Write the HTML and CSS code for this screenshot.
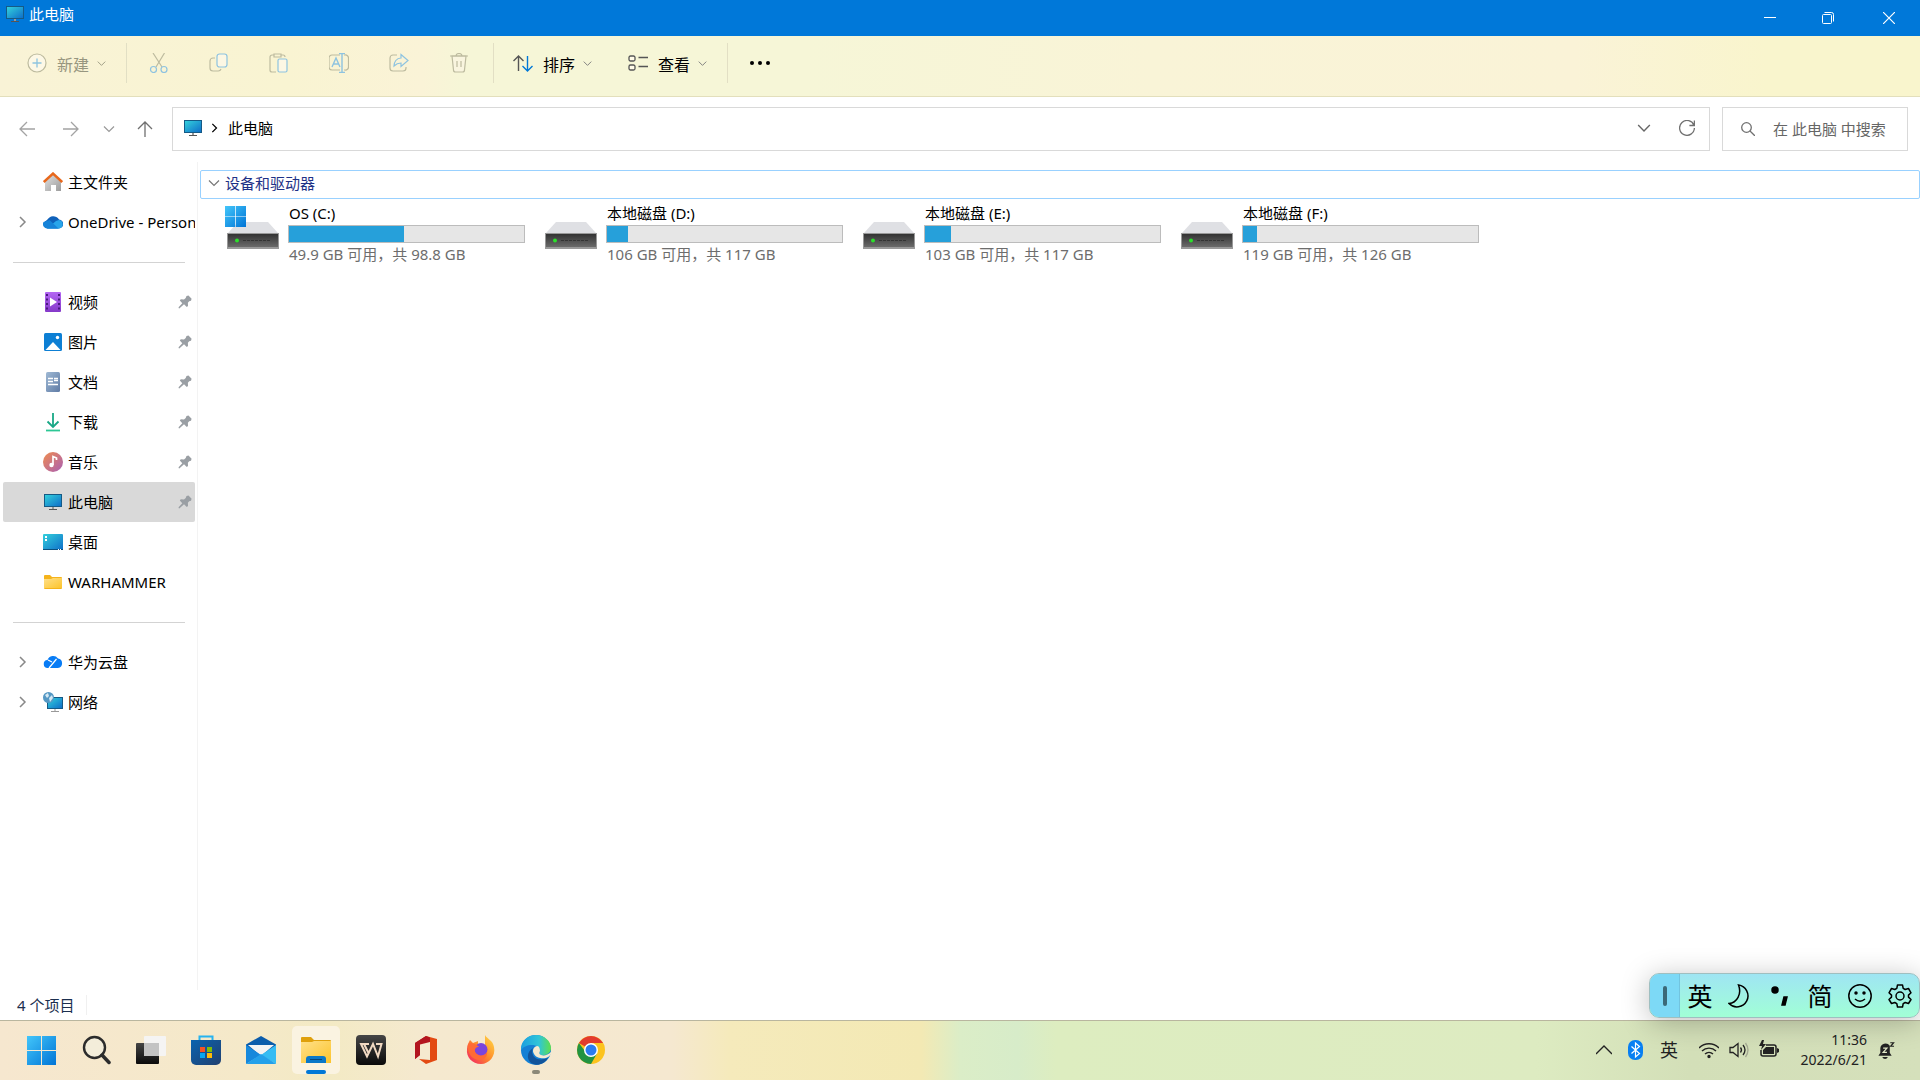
FILE: index.html
```html
<!DOCTYPE html>
<html lang="zh-CN">
<head>
<meta charset="utf-8">
<meta name="viewport" content="width=device-width, initial-scale=1">
<title>此电脑</title>
<link rel="stylesheet" href="styles.css">
</head>
<body>
<svg class="defs" aria-hidden="true">
  <defs>
    <linearGradient id="g-screen" x1="0" y1="0" x2="1" y2="1"><stop offset="0" stop-color="#33d0dc"/><stop offset="1" stop-color="#0f6fc9"/></linearGradient>
    <linearGradient id="g-win" x1="0" y1="0" x2="1" y2="1"><stop offset="0" stop-color="#43c6fa"/><stop offset="1" stop-color="#0074d6"/></linearGradient>
    <linearGradient id="g-drive" x1="0" y1="0" x2="0" y2="1"><stop offset="0" stop-color="#333"/><stop offset="1" stop-color="#6a6a6a"/></linearGradient>
    <linearGradient id="g-folder" x1="0" y1="0" x2="1" y2="1"><stop offset="0" stop-color="#ffe08a"/><stop offset="1" stop-color="#fcc42c"/></linearGradient>
    <linearGradient id="g-video" x1="0" y1="0" x2="0" y2="1"><stop offset="0" stop-color="#b467f3"/><stop offset="1" stop-color="#8539c9"/></linearGradient>
    <linearGradient id="g-music" x1="0" y1="0" x2="1" y2="1"><stop offset="0" stop-color="#f08c4e"/><stop offset="1" stop-color="#a95fb5"/></linearGradient>
    <linearGradient id="g-doc" x1="0" y1="0" x2="1" y2="1"><stop offset="0" stop-color="#9fb9d4"/><stop offset="1" stop-color="#5f7ba5"/></linearGradient>
    <linearGradient id="g-dark" x1="0" y1="0" x2="0" y2="1"><stop offset="0" stop-color="#454545"/><stop offset="1" stop-color="#0a0a0a"/></linearGradient>
    <linearGradient id="g-home" x1="0" y1="0" x2="1" y2="1"><stop offset="0" stop-color="#e2e2e2"/><stop offset="1" stop-color="#9c9c9c"/></linearGradient>
    <linearGradient id="g-store" x1="0" y1="0" x2="1" y2="1"><stop offset="0" stop-color="#0a64b0"/><stop offset="1" stop-color="#21406f"/></linearGradient>
    <linearGradient id="g-fox" x1="1" y1="0" x2="0" y2="1"><stop offset="0" stop-color="#ffe04a"/><stop offset=".5" stop-color="#ff8a2a"/><stop offset="1" stop-color="#f0186c"/></linearGradient>
    <linearGradient id="g-edge" x1="0" y1="0" x2="1" y2="0"><stop offset="0" stop-color="#1a9fe0"/><stop offset=".6" stop-color="#30c5d8"/><stop offset="1" stop-color="#5ee04a"/></linearGradient>
  </defs>
  <symbol id="pc" viewBox="0 0 18 17"><path d="M0 0h18v13H0z" fill="#155a86"/><path d="M1 1h16v11H1z" fill="url(#g-screen)"/><path d="M8 13h2v2H8z" fill="#999"/><path d="M5 15h8v1H5z" fill="#555"/></symbol>
  <symbol id="right" viewBox="0 0 12 12"><path d="M4 1l5 5-5 5" fill="none" stroke="currentColor" stroke-width="1.5"/></symbol>
  <symbol id="down" viewBox="0 0 12 12"><path d="M1 3.500l5 5 5-5" fill="none" stroke="currentColor" stroke-width="1.200"/></symbol>
  <symbol id="pin" viewBox="0 0 14 14"><path d="M8.500 1l2-.6L13.600 3.700l-.6 2-1.800.5-1.300 1.500.1 3.300-1.200 1-2.800-2.700L1.300 13.500.5 13l.3-.9L4.300 8.200 1.800 5.500l1-1.200 3.200.2L7.700 3z" fill="#9a9fa4"/></symbol>
  <symbol id="logo" viewBox="0 0 29 29"><path d="M0 0h14v14H0zM15 0h14v14H15zM0 15h14v14H0zM15 15h14v14H15z" fill="url(#g-win)"/></symbol>
  <symbol id="drive" viewBox="0 0 52 27"><path d="M11 0h30l10 11H1z" fill="#dfe0e4"/><path d="M0 11h52v16H0z" fill="#999"/><path d="M1 12h50v13H1z" fill="url(#g-drive)"/><path d="M16 18.500h28" stroke="#333" stroke-dasharray="3 1"/><circle cx="10" cy="18.500" r="2" fill="#2be02b"/></symbol>
</svg>

<header class="titlebar">
  <svg class="i18"><use href="#pc"/></svg>
  <h1>此电脑</h1>
  <div class="caption">
    <button aria-label="最小化"><svg viewBox="0 0 12 12"><path d="M0 5.500h12" stroke="#fff"/></svg></button>
    <button aria-label="还原"><svg viewBox="0 0 12 12" fill="none" stroke="#fff"><rect x=".5" y="2.500" width="9" height="9" rx="1"/><path d="M2.500 .5h7a2 2 0 0 1 2 2v7"/></svg></button>
    <button aria-label="关闭"><svg viewBox="0 0 12 12"><path d="M0 0l12 12M12 0L0 12" stroke="#fff" stroke-width="1.200"/></svg></button>
  </div>
</header>

<div class="toolbar" role="toolbar" aria-label="命令栏">
  <button class="cmd new" disabled><svg class="i20" viewBox="0 0 20 20" fill="none"><circle cx="10" cy="10" r="9" fill="#fdf8e6" stroke="#bdbb9f" stroke-width="1.200"/><path d="M10 5.500v9M5.500 10h9" stroke="#8ec3e0" stroke-width="1.300"/></svg><span>新建</span><svg class="chev"><use href="#down"/></svg></button>
  <i class="rule"></i>
  <div class="tools">
    <button disabled aria-label="剪切"><svg class="i20" viewBox="0 0 20 20" fill="none" stroke="#bdbb9f" stroke-width="1.200"><path d="M4 0l9 14M15.500 0L7 14"/><g stroke="#8ec3e0"><circle cx="4.500" cy="16.500" r="3"/><circle cx="15" cy="16.500" r="3"/></g></svg></button>
    <button disabled aria-label="复制"><svg class="i20" viewBox="0 0 20 20" fill="none" stroke="#bdbb9f" stroke-width="1.200"><path d="M6 5H4a3 3 0 0 0-3 3v7a3 3 0 0 0 3 3h5a3 3 0 0 0 3-2"/><rect x="8" y="1" width="10" height="13" rx="2.500" fill="#fcf7e4" stroke="#8ec3e0"/></svg></button>
    <button disabled aria-label="粘贴"><svg class="i20" viewBox="0 0 20 20" fill="none" stroke="#bdbb9f" stroke-width="1.200"><path d="M5 2H3a2 2 0 0 0-2 2v13a2 2 0 0 0 2 2h4M12 2h2a2 2 0 0 1 2 2M5 1h7v3H5z"/><rect x="9" y="6" width="9" height="13" rx="1.500" fill="#fcf7e4" stroke="#8ec3e0"/></svg></button>
    <button disabled aria-label="重命名"><svg class="i20" viewBox="0 0 20 20" fill="none" stroke="#bdbb9f" stroke-width="1.200"><path d="M11 2H3a3 3 0 0 0-3 3v9a3 3 0 0 0 3 3h8M15 2h1a3 3 0 0 1 3.500 3v9a3 3 0 0 1-3.500 3h-1"/><path d="M13 1v18M10 .6h6M10 19.400h6M3 14l4-9 4 9M4.500 11h5" stroke="#8ec3e0" stroke-width="1.400"/></svg></button>
    <button disabled aria-label="共享"><svg class="i20" viewBox="0 0 20 20" fill="none" stroke="#bdbb9f" stroke-width="1.200"><path d="M8 2H4a3 3 0 0 0-3 3v10a3 3 0 0 0 3 3h10a3 3 0 0 0 3-3v-1"/><path d="M12 1.500l7 6-7 6v-3.500c-3 0-5 1-7 3 0-4 2.500-8 7-8z" stroke="#8ec3e0"/></svg></button>
    <button disabled aria-label="删除"><svg class="i20" viewBox="0 0 20 20" fill="none" stroke="#bdbb9f" stroke-width="1.200"><path d="M3 3l1.500 14a2 2 0 0 0 2 2h7a2 2 0 0 0 2-2L17 3z" fill="#f9f5df"/><path d="M1 3h18M7 3a3 2.500 0 0 1 6 0M8 8v6M12 8v6"/></svg></button>
  </div>
  <i class="rule"></i>
  <button class="cmd"><svg class="i20" viewBox="0 0 20 20" fill="none" stroke-width="1.400"><path d="M5.500 18V3M.5 8l5-5 5 5" stroke="#555"/><path d="M14.500 3v15M9.500 13l5 5 5-5" stroke="#0078d7"/></svg><span>排序</span><svg class="chev"><use href="#down"/></svg></button>
  <button class="cmd"><svg class="i20" viewBox="0 0 20 20" fill="#fffbe8" stroke="#555" stroke-width="1.300"><rect x="1" y="3" width="6" height="5" rx="1.500"/><rect x="1" y="12" width="6" height="5" rx="1.500"/><path d="M10.500 4.500H20M10.500 13.500H20"/></svg><span>查看</span><svg class="chev"><use href="#down"/></svg></button>
  <i class="rule"></i>
  <button class="more" aria-label="查看更多"><svg class="i20" viewBox="0 0 20 20"><circle cx="2" cy="10" r="2"/><circle cx="10" cy="10" r="2"/><circle cx="18" cy="10" r="2"/></svg></button>
</div>

<div class="navrow">
  <nav class="history" aria-label="导航">
    <button disabled aria-label="后退"><svg class="i16" viewBox="0 0 16 16"><path d="M16 8H1M8 1L1 8l7 7"/></svg></button>
    <button disabled aria-label="前进"><svg class="i16" viewBox="0 0 16 16"><path d="M0 8h15M8 1l7 7-7 7"/></svg></button>
    <button class="narrow" aria-label="最近浏览的位置"><svg class="i12"><use href="#down"/></svg></button>
    <button class="up" aria-label="上移"><svg class="i16" viewBox="0 0 16 16"><path d="M8 16V1M1 8l7-7 7 7"/></svg></button>
  </nav>
  <div class="address">
    <svg class="i18"><use href="#pc"/></svg>
    <svg class="sep"><use href="#right"/></svg>
    <a href="#">此电脑</a>
    <button class="end" aria-label="以前的位置"><svg class="i14"><use href="#down"/></svg></button>
    <button aria-label="刷新"><svg class="i16" viewBox="0 0 16 16"><path d="M15 5.500A7.400 7.400 0 1 0 15.400 8M15.400 .5v5h-5"/></svg></button>
  </div>
  <label class="search"><svg class="i14" viewBox="0 0 14 14"><circle cx="5.500" cy="5.500" r="4.800"/><path d="M9 9l5 5"/></svg><input type="search" aria-label="搜索" placeholder="在 此电脑 中搜索"></label>
</div>

<main class="body">
  <nav class="side" aria-label="文件夹">
    <a class="item" href="#"><svg class="i20 c2" viewBox="0 0 20 20"><path d="M2 9l8-7 8 7v10h-5v-6H8v6H2z" fill="url(#g-home)"/><path d="M.8 10L10 1.500 19.200 10" fill="none" stroke="#e8681c" stroke-width="2.400"/></svg><span>主文件夹</span></a>
    <a class="item" href="#"><svg class="tw"><use href="#right"/></svg><svg class="i20 c2" viewBox="0 0 20 20"><path d="M4.500 16.500A4.500 4.500 0 0 1 4 8 7 7 0 0 1 16 7.500a4.500 4.500 0 0 1-.5 9z" fill="#0f61ba"/><path d="M4 16.500L13 9l3-1a4.300 4.300 0 0 1 0 8.500z" fill="#28a5ea"/><path d="M.5 10l6-2 9 8.500h-11A4.400 4.400 0 0 1 .5 10z" fill="#1683d8"/></svg><span>OneDrive - Personal</span></a>
    <hr>
    <a class="item" href="#"><svg class="i20 c2" viewBox="0 0 20 20"><rect x="2" width="16" height="20" rx="1" fill="url(#g-video)"/><path d="M4 2v17M16 2v17" stroke="#4b1a80" stroke-width="2" stroke-dasharray="2 2.500"/><path d="M7 5.500l7 4.500-7 4.500z" fill="#fff"/></svg><span>视频</span><svg class="pin"><use href="#pin"/></svg></a>
    <a class="item" href="#"><svg class="i20 c2" viewBox="0 0 20 20"><rect x="1" y="1" width="18" height="18" rx="1.500" fill="#0d7fd4"/><path d="M2.500 18L10 10l7.500 8z" fill="#fff"/><circle cx="14.500" cy="5.500" r="1.700" fill="#fff"/></svg><span>图片</span><svg class="pin"><use href="#pin"/></svg></a>
    <a class="item" href="#"><svg class="i20 c2" viewBox="0 0 20 20"><rect x="3" width="14" height="20" rx="1.500" fill="url(#g-doc)"/><path d="M5 6.500h5M5 9.500h5M5 12.500h10M11 6.500h4M11 8.500h4" stroke="#fff" stroke-width="1.300"/></svg><span>文档</span><svg class="pin"><use href="#pin"/></svg></a>
    <a class="item" href="#"><svg class="i20 c2" viewBox="0 0 20 20" fill="none" stroke="#18a886" stroke-width="1.800"><path d="M10 1v14M4.500 9.500L10 15l5.500-5.500"/><path d="M3 18.500h14" stroke="#2dc795"/></svg><span>下载</span><svg class="pin"><use href="#pin"/></svg></a>
    <a class="item" href="#"><svg class="i20 c2" viewBox="0 0 20 20"><circle cx="10" cy="10" r="10" fill="url(#g-music)"/><circle cx="8.500" cy="13" r="2.200" fill="#fff"/><path d="M10 13V4.500l3.500 1.500v2" fill="none" stroke="#fff" stroke-width="1.700"/></svg><span>音乐</span><svg class="pin"><use href="#pin"/></svg></a>
    <a class="item active" href="#" aria-current="page"><svg class="i18 c2"><use href="#pc"/></svg><span>此电脑</span><svg class="pin"><use href="#pin"/></svg></a>
    <a class="item" href="#"><svg class="i20 c2" viewBox="0 0 20 20"><rect y="2" width="20" height="16" rx="1" fill="url(#g-screen)"/><path d="M2 4h2v2H2zM2 7h2v2H2z" fill="#fff"/><path d="M0 17h20v1H0z" fill="#0b4f7d"/><path d="M15 17.500h4" stroke="#fff" stroke-dasharray="1 1"/></svg><span>桌面</span></a>
    <a class="item" href="#"><svg class="i20 c2" viewBox="0 0 20 20"><path d="M1 4q0-1 1-1h5l2 2h9q1 0 1 1v10q0 1-1 1H2q-1 0-1-1z" fill="#f5b31b"/><path d="M1 7h7l2-1h9v10H1z" fill="url(#g-folder)"/></svg><span>WARHAMMER</span></a>
    <hr>
    <a class="item" href="#"><svg class="tw"><use href="#right"/></svg><svg class="i20 c2" viewBox="0 0 20 20"><path d="M5 16a4 4 0 0 1-.5-8A6 6 0 0 1 15 6.500 4.800 4.800 0 0 1 15 16z" fill="#087cf5"/><path d="M6 16l7.500-9M5 8l4 2" stroke="#fff" stroke-width="1.200"/></svg><span>华为云盘</span></a>
    <a class="item" href="#"><svg class="tw"><use href="#right"/></svg><svg class="i20 c2" viewBox="0 0 20 20"><rect x="4" y="5" width="16" height="12" fill="#155a86"/><rect x="5" y="6" width="14" height="10" fill="url(#g-screen)"/><path d="M8 19.500h8M12 17v2" stroke="#999"/><circle cx="5.500" cy="5.500" r="5.500" fill="#5598c4"/><path d="M2 3l3-2 1 3-2 2zM6 6l3-3 1 3-3 4z" fill="#d5e9f4"/></svg><span>网络</span></a>
  </nav>
  <section class="content">
    <button class="group"><svg class="i12"><use href="#down"/></svg><span>设备和驱动器</span></button>
    <div class="drives">
      <article class="drive"><div class="pic"><svg class="disk"><use href="#drive"/></svg><svg class="badge"><use href="#logo"/></svg></div><div class="info"><h2>OS (C:)</h2><div class="bar"><div style="width:49%"></div></div><p>49.9 GB 可用，共 98.8 GB</p></div></article>
      <article class="drive"><div class="pic"><svg class="disk"><use href="#drive"/></svg></div><div class="info"><h2>本地磁盘 (D:)</h2><div class="bar"><div style="width:9%"></div></div><p>106 GB 可用，共 117 GB</p></div></article>
      <article class="drive"><div class="pic"><svg class="disk"><use href="#drive"/></svg></div><div class="info"><h2>本地磁盘 (E:)</h2><div class="bar"><div style="width:11%"></div></div><p>103 GB 可用，共 117 GB</p></div></article>
      <article class="drive"><div class="pic"><svg class="disk"><use href="#drive"/></svg></div><div class="info"><h2>本地磁盘 (F:)</h2><div class="bar"><div style="width:6%"></div></div><p>119 GB 可用，共 126 GB</p></div></article>
    </div>
  </section>
</main>

<footer class="status"><span>4 个项目</span></footer>

<div class="taskbar">
  <div class="apps">
    <button aria-label="开始"><svg class="i29"><use href="#logo"/></svg></button>
    <button aria-label="搜索"><svg class="i30" viewBox="0 0 30 30" fill="none" stroke="#2c2c2c"><circle cx="13.500" cy="12.500" r="10.500" fill="#f3edda" stroke-width="2.400"/><path d="M21 20l7 7.500" stroke-width="3.500" stroke-linecap="round"/></svg></button>
    <button aria-label="任务视图"><svg class="i30" viewBox="0 0 30 30"><rect y="8" width="23" height="21" rx="1" fill="url(#g-dark)"/><rect x="8" y="1" width="22" height="20" rx="1" fill="#f4f4f4" opacity=".95"/><path d="M8 8h15v13H8z" fill="#c3c3c3"/></svg></button>
    <button aria-label="Microsoft Store"><svg class="i30" viewBox="0 0 30 30"><path d="M8.500 6V1.500h13V6" fill="none" stroke="#27b3ef" stroke-width="2"/><path d="M0 5h30v20a5 5 0 0 1-5 5H5a5 5 0 0 1-5-5z" fill="url(#g-store)"/><path d="M9 12h5v5H9z" fill="#f35325"/><path d="M16 12h5v5h-5z" fill="#81bc06"/><path d="M9 18h5v5H9z" fill="#05a6f0"/><path d="M16 18h5v5h-5z" fill="#ffba08"/></svg></button>
    <button aria-label="邮件"><svg class="i30" viewBox="0 0 30 30"><path d="M0 9.500L15 1l15 8.500V19H0z" fill="#0a5cab"/><path d="M2 10h26L15 21z" fill="#f3f3f3"/><path d="M0 10l15 10-15 9z" fill="#1688dc"/><path d="M30 10L15 20l15 9z" fill="#35bcf3"/><path d="M0 29l15-10 15 10z" fill="#23a0ea"/></svg></button>
    <button class="on" aria-label="文件资源管理器"><svg class="i30" viewBox="0 0 30 30"><path d="M0 3q0-1 1-1h9l3 3h16q1 0 1 1v8H0z" fill="#dfa00c"/><path d="M0 7h11l2-1h17v22H0z" fill="url(#g-folder)"/><path d="M5 28v-4q0-3 3-3h14q3 0 3 3v4z" fill="#0a78c8"/><path d="M9 24.500h12" stroke="#07477b"/></svg></button>
    <button aria-label="WPS"><svg class="i30" viewBox="0 0 30 30"><rect width="30" height="30" rx="4" fill="url(#g-dark)"/><path d="M13 9H5l6 12.500L17 9l5 12.500L25.500 9H20M8 9l5 10" fill="none" stroke="#f1d9c2" stroke-width="2"/></svg></button>
    <button aria-label="Office"><svg class="i30" viewBox="0 0 30 30"><path d="M4 8l11-7v5l-6 3v11l-5 4z" fill="#b51c28"/><path d="M15 1l11 3v21l-11 4-7-5 11 1V7l-4-1z" fill="#e34a12"/><path d="M4 8l11-7 4 1.500V7L9 9.500V20l-5 4z" fill="#b3151f"/></svg></button>
    <button aria-label="Firefox"><svg class="i30" viewBox="0 0 30 30"><path d="M19 0c2 4 8 5 9 12 2 9-5 17-13 17C6 29 0 22 1 14c0-4 2-7 3-9l3 3 5-2v5h7z" fill="url(#g-fox)"/><circle cx="15" cy="14.500" r="6.500" fill="#7b45dc"/><path d="M2 9c4-2 8 0 11 3-3 0-5 2-4 5 3 5 10 4 12 0 1 6-6 10-12 7C4 22 1 15 2 9z" fill="#ff6a35"/></svg></button>
    <button class="run" aria-label="Edge"><svg class="i30" viewBox="0 0 30 30"><circle cx="15" cy="15" r="15" fill="#1480d5"/><path d="M0 13C1 4 8 0 15 0c8 0 15 6 15 13 0 5-5 8-10 7-2-1-2-2-1-4 0-4-4-6-8-6-5 0-9 2-11 5z" fill="url(#g-edge)"/><path d="M12 13c-3 7 3 13 11 11l4-1c-4 7-13 9-18 4-4-5-2-11 3-14z" fill="#12549b"/><path d="M16 11c-4 1-5 5-3 8 2 4 8 5 12 4 2-1 4-2 5-4v-2c-3 3-7 4-10 3-2-1-2-2-1-4 0-3-1-5-3-5z" fill="#f5ead0"/></svg></button>
    <button aria-label="Chrome"><svg class="i30" viewBox="0 0 30 30"><circle cx="15" cy="15" r="14" fill="#fcc31e"/><path d="M15 15L2.900 8A14 14 0 0 1 27.100 8H15z" fill="#e33b2e"/><path d="M2.900 8A14 14 0 0 0 15 29l6-10.500-6 2-5-3z" fill="#229342"/><circle cx="15" cy="15" r="7" fill="#fff"/><circle cx="15" cy="15" r="5.500" fill="#2c7cf0"/></svg></button>
  </div>
  <div class="tray">
    <button class="hidden-icons" aria-label="显示隐藏的图标"><svg class="i16" viewBox="0 0 16 16" fill="none" stroke="#222" stroke-width="1.300"><path d="M0 12l8-8 8 8"/></svg></button>
    <button aria-label="蓝牙"><svg class="bt" viewBox="0 0 15 20"><rect width="15" height="20" rx="7" fill="#087ff2"/><path d="M3.500 6.500l8 7-4 3.500V3l4 3.500-8 7" fill="none" stroke="#fff" stroke-width="1.200"/></svg></button>
    <button class="lang">英</button>
    <button class="sys" aria-label="网络、音量和电池">
      <svg class="i20" viewBox="0 0 20 20" fill="none" stroke="#222" stroke-width="1.400"><path d="M0 8a14 14 0 0 1 20 0M3 11a10 10 0 0 1 14 0M6 14a6 6 0 0 1 8 0"/><circle cx="10" cy="16.500" r="1" fill="#222"/></svg>
      <svg class="i20" viewBox="0 0 20 20" fill="none" stroke="#222" stroke-width="1.300"><path d="M1 7.500h3l5-4v13l-5-4H1zM11.500 7.500q2 2.500 0 5M14 5q4 5 0 10"/><path d="M16.500 3q5 7 0 14" stroke="#a4a992"/></svg>
      <svg class="i20" viewBox="0 0 20 20"><path d="M7 5h8q2 0 2 2v7q0 2-2 2H4q-2 0-2-2v-4" fill="none" stroke="#222" stroke-width="1.500"/><path d="M7 7h8v7H4v-4zM18 8l2 1v3l-2 1zM3 0L0 6h3l-1 4 5-6H4l1-4z" fill="#222"/></svg>
    </button>
    <button class="clock"><time>11:36</time><time>2022/6/21</time></button>
    <button class="bell" aria-label="通知"><svg class="i18" viewBox="0 0 18 18"><path d="M1 14.500l2-3V7a5.500 5.500 0 0 1 10-3v7.500l2 3zM5 16h6q-1 2-3 2t-3-2z" fill="#222"/><path d="M6 6.500h4L6 11h4" fill="none" stroke="#e2e8c8" stroke-width="1.300"/><path d="M13.500 .8h3.500L14 4.500h3.500" fill="none" stroke="#222" stroke-width="1.300"/></svg></button>
  </div>
</div>

<div class="ime" role="toolbar" aria-label="输入法">
  <i class="grip"></i>
  <button>英</button>
  <button aria-label="半角"><svg class="i24" viewBox="0 0 24 24"><path d="M10.500 1A11 11 0 1 1 1 19.500C9 19 14 10 10.500 1z"/></svg></button>
  <button aria-label="中文标点"><svg class="i24" viewBox="0 0 24 24"><circle cx="7" cy="6" r="3" fill="#000"/><path d="M16 13h3l-2 8h-3z" fill="#000"/></svg></button>
  <button>简</button>
  <button aria-label="表情符号"><svg class="i24" viewBox="0 0 24 24"><circle cx="12" cy="12" r="11.200"/><path d="M7 15q5 4.500 10 0"/><circle cx="8" cy="9" r="1" fill="#000"/><circle cx="16" cy="9" r="1" fill="#000"/></svg></button>
  <button aria-label="设置"><svg class="i24" viewBox="0 0 24 24"><path d="M9.500 1h5l.7 3.300 2 1.200 3.300-1L23 8.800l-2.500 2.300v2L23 15.500l-2.500 4-3.300-1-2 1.200-.7 3.300h-5l-.7-3.300-2-1.200-3.300 1-2.500-4 2.500-2.400v-2L1 8.800l2.500-4.300 3.300 1 2-1.200z" stroke-linejoin="round"/><circle cx="12" cy="12" r="4"/></svg></button>
</div>
</body>
</html>
```
FILE: styles.css
```css
* { box-sizing: border-box; }
body {
  margin: 0;
  min-height: 100vh;
  display: flex;
  flex-direction: column;
  background: #fff;
  color: #000;
  font: 15px/20px "Noto Sans", "Noto Sans CJK SC", sans-serif;
}
button, input { font: inherit; color: inherit; }
button {
  border: 0;
  padding: 0;
  background: none;
  display: flex;
  align-items: center;
  justify-content: center;
}
a { color: inherit; text-decoration: none; }
h1, h2, p { margin: 0; font-size: inherit; font-weight: 400; }
svg { display: block; flex: none; }
.defs { position: absolute; width: 0; height: 0; }

.i12 { width: 12px; height: 12px; }
.i14 { width: 14px; height: 14px; }
.i16 { width: 16px; height: 16px; }
.i18 { width: 18px; height: 17px; }
.i20 { width: 20px; height: 20px; }
.i24 { width: 24px; height: 24px; }
.i29 { width: 29px; height: 29px; }
.i30 { width: 30px; height: 30px; }

/* Title bar */
.titlebar {
  height: 36px;
  padding-left: 6px;
  display: flex;
  gap: 5px;
  background: #0078d9;
  color: #fff;
}
.titlebar > svg { margin-top: 6px; }
.titlebar h1 { margin-top: 4px; }
.caption { margin-left: auto; display: flex; }
.caption button { width: 58px; }
.caption button:last-child { width: 63px; }
.caption svg { width: 12px; height: 12px; }

/* Command bar */
.toolbar {
  height: 61px;
  display: flex;
  align-items: center;
  padding: 0 0 6px 8px;
  border-bottom: 1px solid #e3dfbc;
  font-size: 16px;
  background: linear-gradient(90deg, #f9f3d6 0, #f9f4d2 15%, #faf3d7 22%, #f6f6d7 24%, #f6f6d7 42%, #f9f4d7 60%, #faf3d7 82%, #f9f5cd 92%);
}
.cmd { width: 115px; height: 40px; padding-left: 19px; justify-content: flex-start; }
.cmd span { margin: 4px 0 0 10px; width: 32px; }
.chev { width: 9px; height: 9px; margin-left: 8px; color: #777; }
.new { width: 118px; color: #97967f; }
.new .chev { color: #97967f; }
.rule { width: 1px; height: 40px; background: #e2dfc4; }
.cmd + .rule { margin-right: 1px; }
.cmd + .cmd { width: 118px; }
.tools { display: flex; padding: 0 4px 0 1px; }
.tools button { width: 60px; height: 40px; }
.more { width: 61px; height: 40px; }

/* Address row */
.navrow {
  padding: 10px 12px 11px 8px;
  display: flex;
  background: #fff;
}
.navrow svg { fill: none; stroke: #707070; stroke-width: 1.3; }
.history { display: flex; width: 164px; }
.history button { width: 44px; color: #999; padding-right: 6px; }
.history .narrow { width: 32px; }
.history .up { width: 40px; }
.history button:disabled svg { stroke: #a3a3a3; }
.address {
  flex: 1;
  height: 44px;
  display: flex;
  align-items: center;
  padding: 0 6px 2px 11px;
  border: 1px solid #d9d9d9;
}
.address .i18 { stroke: none; }
.address .sep { width: 10px; height: 10px; margin: 0 9px 0 7px; }
.address .end { margin-left: auto; }
.address button { width: 54px; height: 40px; color: #666; }
.address button:last-child { width: 32px; }
.search {
  width: 186px;
  margin-left: 12px;
  display: flex;
  align-items: center;
  padding-left: 18px;
  gap: 18px;
  border: 1px solid #d9d9d9;
}
.search input { width: 130px; min-width: 0; border: 0; padding: 0; outline: 0; background: none; }
.search input::placeholder { color: #666; opacity: 1; }

/* Folder pane and contents */
.body { flex: 1; display: flex; }
.side {
  width: 198px;
  flex: none;
  padding: 0 2px 0 3px;
  border-right: 1px solid #f3f3f3;
}
.item {
  height: 40px;
  display: grid;
  grid-template-columns: 27px 20px 1fr auto;
  align-items: center;
  padding: 0 3px 0 13px;
  border-radius: 2px;
}
.item .tw { width: 12px; height: 12px; color: #888; }
.item .c2 { grid-column: 2; grid-row: 1; justify-self: center; }
.item span { grid-column: 3; grid-row: 1; padding-left: 5px; overflow: hidden; white-space: nowrap; }
.item .pin { grid-column: 4; grid-row: 1; width: 14px; height: 14px; }
.item:not(:has(.pin)) { padding-right: 0; }
.active { background: #d9d9d9; }
.side hr { height: 1px; margin: 20px 10px 19px; border: 0; background: #d3d3d3; }
.content { flex: 1; min-width: 0; padding: 8px 0 0 2px; }
.group {
  width: 100%;
  height: 29px;
  justify-content: flex-start;
  gap: 5px;
  padding: 0 0 3px 7px;
  border: 1px solid #99d1ff;
  border-radius: 2px;
  color: #1e3287;
}
.group svg { color: #777; }
.drives { display: flex; flex-wrap: wrap; padding: 4px 0 0 26px; }
.drive { width: 318px; display: flex; gap: 8px; }
.pic { position: relative; padding-top: 19px; }
.disk { width: 54px; height: 27px; }
.badge { position: absolute; left: -1px; top: 3px; width: 21px; height: 21px; }
.info { width: 237px; }
.info h2, .info p { padding-left: 1px; }
.bar { height: 18px; margin: 2px 0 1px; border: 1px solid #bcbcbc; background: #e6e6e6; }
.bar div { height: 100%; background: #26a0da; }
.info p { color: #6d6d6d; }

.status { height: 30px; display: flex; padding: 5px 0 5px 17px; color: #1b2f4f; }
.status span { padding-right: 12px; border-right: 1px solid #f0f0f0; }

/* Taskbar */
.taskbar {
  height: 60px;
  display: flex;
  justify-content: space-between;
  padding: 5px 25px 6px 17px;
  border-top: 1px solid #b9b69f;
  background: linear-gradient(90deg, #f6e7cf 0, #f5e9c9 13%, #f3eac4 17%, #f5e9cf 22%, #f5e8d0 35%, #f5eabb 38%, #f3e9b4 48%, #dbedc7 50%, #d7ecc9 53%, #ddedc0 55%, #ddebc1 80%, #d3dfb8 88%, #d5e0bb 100%);
}
.apps, .tray { display: flex; }
.apps { gap: 7px; }
.apps button { position: relative; width: 48px; height: 48px; border-radius: 5px; }
.apps .on { background: #faf3e1; }
.on::after, .run::after {
  content: "";
  position: absolute;
  left: 14px;
  bottom: 0;
  width: 20px;
  height: 4px;
  border-radius: 2px;
  background: #0078d7;
}
.run::after { left: 20px; width: 8px; background: #8b8878; }
.tray { color: #222; gap: 14px; }
.hidden-icons { margin-right: 2px; }
.bt { width: 15px; height: 20px; }
.lang { font-size: 18px; width: 20px; margin-left: 2px; }
.sys { gap: 10px; margin-left: 6px; }
.clock { flex-direction: column; align-items: flex-end; width: 74px; font-size: 14px; white-space: nowrap; }
.bell { margin-left: -4px; }

/* Floating input-method bar */
.ime {
  position: absolute;
  right: 0;
  top: 973px;
  height: 45px;
  display: flex;
  border: 1px solid #9fbfc0;
  border-radius: 10px;
  overflow: hidden;
  background: linear-gradient(#9fe5f3, #a1ffd6);
  box-shadow: 0 4px 28px rgba(0, 0, 0, .25);
  font-size: 25px;
}
.ime button { width: 40px; }
.ime button:last-child { width: 39px; }
.ime svg { fill: none; stroke: #000; stroke-width: 1.5; }
.grip { width: 30px; padding: 12px 13px; background: #7dd9f6; border-right: 1px solid #72c4df; }
.grip::before { content: ""; display: block; width: 4px; height: 20px; border-radius: 2px; background: #3b6978; }
```
